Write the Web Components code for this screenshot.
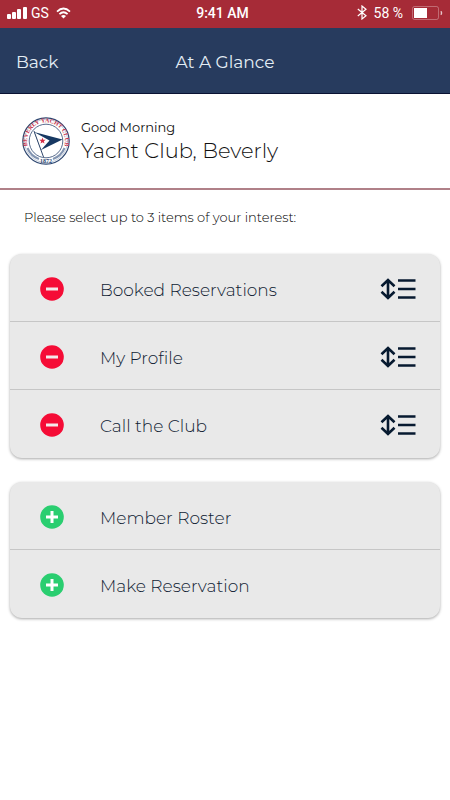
<!DOCTYPE html>
<html lang="en">
<head>
<meta charset="utf-8">
<meta name="viewport" content="width=device-width, initial-scale=1">
<title>At A Glance</title>
<style>
  body {
    margin: 0;
    background: #fff;
    color: #111;
    font-family: Montserrat, Inter, "Open Sans", sans-serif;
    font-weight: 400;
  }
</style>
</head>
<body>
<glance-screen></glance-screen>

<script>
// ===== STATUS BAR =====
class StatusBar extends HTMLElement {
  constructor() {
    super();
    this.attachShadow({ mode: 'open' });
    this.shadowRoot.innerHTML = `
      <style>
        :host {
          display: grid;
          grid-template-columns: 1fr auto 1fr;
          align-items: center;
          height: 28px;
          padding: 0 7px 0 6px;
          background: #a62b37;
          color: #fff;
          font: 400 14px/16px Roboto, sans-serif;
        }
        .side { display: flex; align-items: center; gap: 4px; padding-bottom: 3px; }
        .right { justify-content: flex-end; gap: 7px; }
        .wifi { margin-left: 3px; }
        .time { font-weight: 500; padding: 0 4px 3px 0; }
        svg { display: block; }
      </style>
      <div class="side">
        <svg width="21" height="13" fill="#fff">
          <rect x="1" y="8" width="4" height="5" rx="1"/>
          <rect x="6" y="6" width="4" height="7" rx="1"/>
          <rect x="11" y="3" width="4" height="10" rx="1"/>
          <rect x="17" y="1" width="4" height="12" rx="1"/>
        </svg>
        <span>GS</span>
        <svg class="wifi" width="15" height="12" viewBox="0 0 15 12" fill="none" stroke="#fff" stroke-width="1.8">
          <path d="M1 4.6Q7.500-1.600 14 4.600"/>
          <path d="M3.400 7.200Q7.500 3.400 11.600 7.200"/>
          <path d="M5 8.900Q7.500 6.900 10 8.900L7.500 11.600Z" fill="#fff" stroke="none"/>
        </svg>
      </div>
      <span class="time">9:41 AM</span>
      <div class="side right">
        <svg width="10" height="15" viewBox="0 0 10 15" fill="none" stroke="#fff" stroke-width="1.200">
          <path d="M.8 4L9 10.800L5 14V1L9 4.200L.8 11"/>
        </svg>
        <span>58 %</span>
        <svg width="33" height="14" viewBox="0 0 33 14">
          <rect x="2.500" y=".5" width="26" height="13" rx="2" fill="none" stroke="#fff" stroke-opacity=".3"/>
          <rect x="4" y="2" width="13" height="10" fill="#fff"/>
          <path d="M31 5Q33 7 31 9Z" fill="#fff" stroke="#fff" stroke-opacity=".4" fill-opacity=".6"/>
        </svg>
      </div>
    `;
  }
}

// ===== NAVIGATION =====
class NavHeader extends HTMLElement {
  constructor() {
    super();
    this.attachShadow({ mode: 'open' });
    this.shadowRoot.innerHTML = `
      <style>
        :host {
          display: grid;
          grid-template-columns: 1fr auto 1fr;
          align-items: center;
          height: 65px;
          padding: 0 16px;
          background: #273b5e;
          border-bottom: 1px solid #0a1233;
          color: #e3edf5;
        }
        button {
          justify-self: start;
          border: none;
          padding: 2px 0 0;
          background: none;
          color: inherit;
          font: inherit;
          font-size: 17px;
          line-height: 24px;
          cursor: pointer;
        }
        h1 { margin: 0; padding-top: 2px; font-size: 17px; line-height: 24px; font-weight: 400; }
      </style>
      <button type="button">Back</button>
      <h1><slot></slot></h1>
    `;
  }
}

// ===== CLUB LOGO =====
class ClubLogo extends HTMLElement {
  constructor() {
    super();
    this.attachShadow({ mode: 'open' });
    this.shadowRoot.innerHTML = `
      <style>
        :host { display: block; width: 48px; height: 48px; }
        svg { display: block; width: 100%; height: 100%; }
        text { font: 700 6px "Liberation Serif", serif; }
      </style>
      <svg viewBox="0 0 48 48" role="img" aria-label="Club logo">
        <defs>
          <path id="top" d="M8 34.500A19 19 0 1 1 40 34.500"/>
        </defs>
        <circle cx="24" cy="24" r="23.200" fill="#fff" stroke="#2d4670" stroke-width="1.200"/>
        <circle cx="24" cy="24" r="21.600" fill="none" stroke="#9aabc2" stroke-width=".6"/>
        <path d="M5.500 31A19.500 19.500 0 0 0 17 42M31 42A19.500 19.500 0 0 0 42.500 31" fill="none" stroke="#8294b1" stroke-width="2"/>
        <circle cx="24" cy="24" r="16.800" fill="#fff" stroke="#2d4670" stroke-width=".8"/>
        <text fill="#c8324b"><textPath href="#top" startOffset="50%" text-anchor="middle">BEVERLY YACHT CLUB</textPath></text>
        <text x="24" y="45.500" fill="#2d4670" text-anchor="middle">1872</text>
        <path d="M12 15L40.500 22.500L19 33Z" fill="#173862"/>
        <path d="M12 15L27.500 23.500L19 33Z" fill="#fff"/>
        <path d="M12 14L21.500 40" stroke="#31486c" stroke-width="1"/>
        <path d="M20.500 20.500L21.300 22.800L23.700 22.800L21.800 24.300L22.500 26.600L20.500 25.200L18.500 26.600L19.200 24.300L17.300 22.800L19.700 22.800Z" fill="#d42c45"/>
      </svg>
    `;
  }
}

// ===== MEMBER GREETING =====
class MemberBanner extends HTMLElement {
  constructor() {
    super();
    this.attachShadow({ mode: 'open' });
    this.shadowRoot.innerHTML = `
      <style>
        :host {
          display: flex;
          align-items: center;
          gap: 11px;
          min-height: 94px;
          padding: 0 22px;
          border-bottom: 2px solid #b08088;
        }
        p { margin: 0; font-size: 13px; line-height: 20px; }
        h2 { margin: 0; font-size: 21px; line-height: 28px; font-weight: 300; }
      </style>
      <club-logo></club-logo>
      <div>
        <p><slot name="greeting"></slot></p>
        <h2><slot></slot></h2>
      </div>
    `;
  }
}

// ===== ITEM CARD =====
class GlanceCard extends HTMLElement {
  constructor() {
    super();
    this.attachShadow({ mode: 'open' });
    this.shadowRoot.innerHTML = `
      <style>
        :host {
          display: block;
          margin: 0 10px 24px;
          border-radius: 12px;
          overflow: hidden;
          background: #e9e9e9;
          box-shadow: 0 1px 3px rgba(0, 0, 0, 0.35);
        }
        ::slotted(glance-item:not(:last-child)) { border-bottom: 1px solid #c6c6c6; }
      </style>
      <div role="list"><slot></slot></div>
    `;
  }
}

// "selected" items can be removed and reordered, the others can be added
class GlanceItem extends HTMLElement {
  constructor() {
    super();
    this.attachShadow({ mode: 'open' });
  }

  connectedCallback() {
    this.setAttribute('role', 'listitem');
    this.render();
  }

  render() {
    const selected = this.hasAttribute('selected');
    const label = this.textContent.trim();

    this.shadowRoot.innerHTML = `
      <style>
        :host {
          display: flex;
          align-items: center;
          height: 68px;
          box-sizing: border-box;
          padding: 2px 24px 0 30px;
          color: #101c33;
        }
        button { border: none; padding: 0; background: none; cursor: pointer; }
        svg { display: block; }
        .label { flex: 1; margin-left: 36px; padding-top: 2px; font-size: 17px; line-height: 24px; font-weight: 300; }
      </style>
      <button type="button" aria-label="${selected ? 'Remove' : 'Add'} ${label}">
        <svg width="24" height="24" viewBox="0 0 24 24">
          <circle cx="12" cy="12" r="11.800" fill="${selected ? '#f50c36' : '#2ace70'}"/>
          ${selected
            ? '<path d="M6 12H18" stroke="#f3e9ea" stroke-width="3"/>'
            : '<path d="M6 12H18M12 6V18" stroke="#fff" stroke-width="3"/>'}
        </svg>
      </button>
      <span class="label"><slot></slot></span>
      ${selected ? `
      <button type="button" aria-label="Move ${label}">
        <svg width="36" height="22" viewBox="0 0 36 22" fill="none" stroke="#071a30" stroke-width="2.600">
          <path d="M8 2V20M1.500 8.200L8 2L14.500 8.200M1.500 13.800L8 20L14.500 13.800"/>
          <path d="M18 2.500H35.500M18 11H35.500M18 19.500H35.500"/>
        </svg>
      </button>` : ''}
    `;
  }
}

// ===== SCREEN =====
class GlanceScreen extends HTMLElement {
  constructor() {
    super();
    this.attachShadow({ mode: 'open' });
    this.shadowRoot.innerHTML = `
      <style>
        :host { display: block; }
        .hint { margin: 0; padding: 18px 24px 28px; font-size: 13px; line-height: 18px; font-weight: 300; color: #000; }
      </style>
      <status-bar></status-bar>
      <nav-header>At A Glance</nav-header>
      <member-banner>
        <span slot="greeting">Good Morning</span>
        Yacht Club, Beverly
      </member-banner>
      <p class="hint">Please select up to 3 items of your interest:</p>
      <glance-card>
        <glance-item selected>Booked Reservations</glance-item>
        <glance-item selected>My Profile</glance-item>
        <glance-item selected>Call the Club</glance-item>
      </glance-card>
      <glance-card>
        <glance-item>Member Roster</glance-item>
        <glance-item>Make Reservation</glance-item>
      </glance-card>
    `;
  }
}

customElements.define('status-bar', StatusBar);
customElements.define('nav-header', NavHeader);
customElements.define('club-logo', ClubLogo);
customElements.define('member-banner', MemberBanner);
customElements.define('glance-card', GlanceCard);
customElements.define('glance-item', GlanceItem);
customElements.define('glance-screen', GlanceScreen);
</script>
</body>
</html>
